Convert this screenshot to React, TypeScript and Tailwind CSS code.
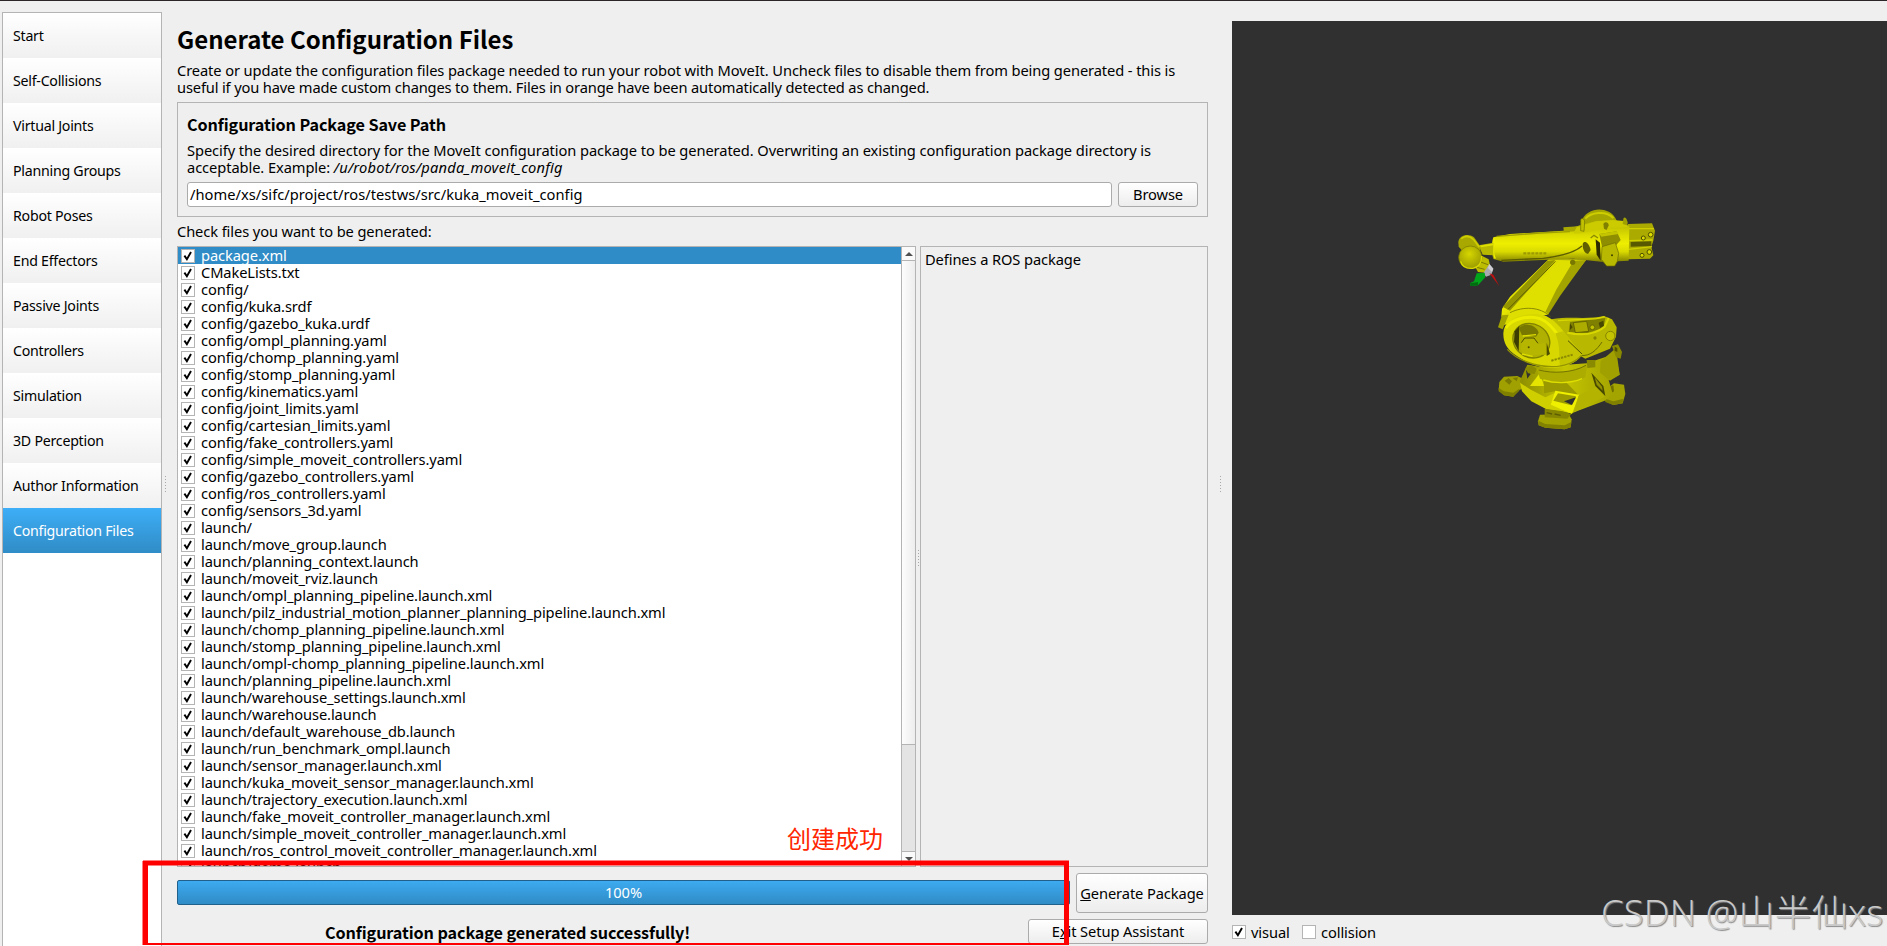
import clsx from 'clsx';

const steps = [
  'Start',
  'Self-Collisions',
  'Virtual Joints',
  'Planning Groups',
  'Robot Poses',
  'End Effectors',
  'Passive Joints',
  'Controllers',
  'Simulation',
  '3D Perception',
  'Author Information',
  'Configuration Files',
];

const files = [
  'package.xml',
  'CMakeLists.txt',
  'config/',
  'config/kuka.srdf',
  'config/gazebo_kuka.urdf',
  'config/ompl_planning.yaml',
  'config/chomp_planning.yaml',
  'config/stomp_planning.yaml',
  'config/kinematics.yaml',
  'config/joint_limits.yaml',
  'config/cartesian_limits.yaml',
  'config/fake_controllers.yaml',
  'config/simple_moveit_controllers.yaml',
  'config/gazebo_controllers.yaml',
  'config/ros_controllers.yaml',
  'config/sensors_3d.yaml',
  'launch/',
  'launch/move_group.launch',
  'launch/planning_context.launch',
  'launch/moveit_rviz.launch',
  'launch/ompl_planning_pipeline.launch.xml',
  'launch/pilz_industrial_motion_planner_planning_pipeline.launch.xml',
  'launch/chomp_planning_pipeline.launch.xml',
  'launch/stomp_planning_pipeline.launch.xml',
  'launch/ompl-chomp_planning_pipeline.launch.xml',
  'launch/planning_pipeline.launch.xml',
  'launch/warehouse_settings.launch.xml',
  'launch/warehouse.launch',
  'launch/default_warehouse_db.launch',
  'launch/run_benchmark_ompl.launch',
  'launch/sensor_manager.launch.xml',
  'launch/kuka_moveit_sensor_manager.launch.xml',
  'launch/trajectory_execution.launch.xml',
  'launch/fake_moveit_controller_manager.launch.xml',
  'launch/simple_moveit_controller_manager.launch.xml',
  'launch/ros_control_moveit_controller_manager.launch.xml',
  'launch/demo.launch',
];

function CheckBox({ checked = true }: { checked?: boolean }) {
  return (
    <span className="block h-[14px] w-[14px] shrink-0 border border-[#b4b4b4] bg-white">
      {checked && (
        <svg viewBox="0 0 12 12" className="block h-3 w-3">
          <path d="M2.4 5.6 L4.9 9.3 L9 2" fill="none" stroke="#000" strokeWidth="1.9" />
        </svg>
      )}
    </span>
  );
}

function Sidebar() {
  return (
    <nav className="mt-[11px] ml-[2px] h-[940px] w-[160px] shrink-0 border border-[#b4b4b4] bg-white">
      {steps.map((step) => (
        <div
          key={step}
          className={clsx(
            'flex h-[45px] items-center bg-linear-to-b pt-px pl-[10px] text-[14.2px] tracking-[-0.25px] whitespace-nowrap',
            step === 'Configuration Files'
              ? 'from-[#3daef7] to-[#308cc6] text-white'
              : 'from-white to-[#f0f0f0] text-black',
          )}
        >
          {step}
        </div>
      ))}
    </nav>
  );
}

function Grip() {
  return (
    <div className="flex h-[16px] w-px flex-col justify-between">
      {[0, 1, 2, 3, 4, 5].map((i) => (
        <span key={i} className="h-px w-px bg-[#a8a8a8]" />
      ))}
    </div>
  );
}

function SavePath() {
  return (
    <section className="mt-[6px] h-[115px] border border-[#b4b4b4] pt-[9px] pl-[9px]">
      <h2 className="font-['Noto_Sans_CJK_SC',sans-serif] text-[16.2px] leading-[24px] font-bold">
        Configuration Package Save Path
      </h2>
      <p className="mt-[6px] leading-[17px] tracking-[-0.08px] whitespace-nowrap">
        Specify the desired directory for the MoveIt configuration package to be generated. Overwriting an existing configuration package directory is
        <br />
        acceptable. Example: <em className="tracking-[0.2px]">/u/robot/ros/panda_moveit_config</em>
      </p>
      <div className="mt-[6px] flex gap-[6px]">
        <div className="h-[25px] w-[925px] rounded-[3px] border border-[#ababab] bg-white pl-[2px] leading-[23px] tracking-[0.03px]">
          /home/xs/sifc/project/ros/testws/src/kuka_moveit_config
        </div>
        <button className="h-[25px] w-[80px] rounded-[3px] border border-[#ababab] bg-linear-to-b from-white to-[#ededed] leading-[23px]">
          Browse
        </button>
      </div>
    </section>
  );
}

function ScrollBar() {
  return (
    <div className="flex w-[14px] flex-col border-l border-[#b4b4b4] bg-[#e4e4e4]">
      <div className="flex h-[14px] items-center justify-center border-b border-[#b4b4b4] bg-[#fafafa]">
        <svg viewBox="0 0 8 4" className="h-1 w-2">
          <path d="M0 4 L4 0 L8 4Z" fill="#505050" />
        </svg>
      </div>
      <div className="h-[484px] border-b border-[#b4b4b4] bg-linear-to-r from-[#fdfdfd] to-[#ededed]" />
      <div className="flex-1" />
      <div className="flex h-[15px] justify-center border-t border-[#b4b4b4] bg-[#fafafa] pt-[5px]">
        <svg viewBox="0 0 8 4" className="h-1 w-2">
          <path d="M0 0 L4 4 L8 0Z" fill="#505050" />
        </svg>
      </div>
    </div>
  );
}

function FileList() {
  return (
    <div className="flex h-[621px] w-[739px] border border-[#b4b4b4] bg-white">
      <ul className="flex-1 overflow-hidden">
        {files.map((file, i) => (
          <li
            key={file}
            className={clsx('flex h-[17px] items-center gap-[6px] pl-[3px] leading-[17px] whitespace-nowrap', i === 0 && 'bg-[#308cc6] text-white')}
          >
            <CheckBox />
            <span>{file}</span>
          </li>
        ))}
      </ul>
      <ScrollBar />
    </div>
  );
}

function Robot() {
  return (
    <svg viewBox="0 0 750 750" className="absolute top-[169px] left-[198px] h-[250px] w-[250px]">
      <defs>
        <linearGradient id="arm" x1="0" y1="0" x2="0" y2="1">
          <stop offset="0" stopColor="#a8a800" />
          <stop offset="0.4" stopColor="#ececec" />
          <stop offset="0.4" stopColor="#ecec00" />
          <stop offset="0.65" stopColor="#e0e000" />
          <stop offset="1" stopColor="#808000" />
        </linearGradient>
        <linearGradient id="barrel" x1="0" y1="0" x2="0" y2="1">
          <stop offset="0" stopColor="#b0b000" />
          <stop offset="0.35" stopColor="#dcdc00" />
          <stop offset="0.55" stopColor="#eeee00" />
          <stop offset="0.75" stopColor="#dada00" />
          <stop offset="1" stopColor="#808000" />
        </linearGradient>
        <linearGradient id="link" x1="0" y1="0" x2="1" y2="0.6">
          <stop offset="0" stopColor="#a8a800" />
          <stop offset="0.4" stopColor="#e8e800" />
          <stop offset="1" stopColor="#a2a200" />
        </linearGradient>
        <linearGradient id="base" x1="0" y1="0" x2="1" y2="0">
          <stop offset="0" stopColor="#8e8e00" />
          <stop offset="0.45" stopColor="#c4c400" />
          <stop offset="1" stopColor="#a0a000" />
        </linearGradient>
        <radialGradient id="ball" cx="0.45" cy="0.35" r="0.7">
          <stop offset="0" stopColor="#d6d600" />
          <stop offset="1" stopColor="#969600" />
        </radialGradient>
      </defs>

      {/* base feet */}
      <path d="M206 600 L208 576 L222 560 L262 558 L290 572 L290 592 L262 602 L250 620 L222 616Z" fill="#a0a000" />
      <path d="M206 594 L222 604 L250 608 L268 596 L268 602 L250 620 L222 616 L206 604Z" fill="#808000" />
      <path d="M224 572 L236 564 L246 574 L238 584Z M248 564 L264 562 L260 574Z" fill="#7a7a00" />
      <path d="M522 616 L538 590 L552 580 L582 584 L586 612 L578 640 L550 645 L526 634Z" fill="#a4a400" />
      <path d="M526 626 L550 634 L580 626 L578 640 L550 645 L526 636Z" fill="#808000" />
      <path d="M536 590 L550 586 L552 604 L540 612Z" fill="#707000" />
      <path d="M324 694 L330 674 L416 672 L425 688 L422 712 L404 718 L346 713 L326 706Z" fill="#a4a400" />
      <path d="M325 692 L346 702 L404 706 L424 696 L422 712 L404 718 L346 713 L326 706Z" fill="#828200" />

      {/* base plate */}
      <path d="M270 572 L292 524 L330 530 L470 520 L560 490 L569 554 L536 570 L548 612 L524 632 L424 670 L350 658 L304 630 L276 600Z" fill="url(#base)" />
      <path d="M270 578 L300 598 L346 622 L376 608 L362 644 L426 670 L350 658 L304 634 L276 604Z" fill="#cfcf00" />
      <path d="M300 588 L330 548 L342 588Z" fill="#e4e400" />
      <path d="M342 562 L410 578 L446 616 L376 604 L342 610Z" fill="#9a9a00" />
      <path d="M376 602 L448 614 L426 672 L362 644Z" fill="#efef00" />
      <path d="M384 610 L438 619 L424 646 L370 632Z" fill="#9b9b00" />
      <path d="M402 634 L438 622 L426 645Z" fill="#303030" />
      <path d="M446 616 L500 590 L524 620 L430 668Z" fill="#b4b400" />
      <path d="M484 548 L520 588 L526 618 L496 588Z" fill="#484800" />
      <path d="M494 562 L516 590 L518 602 L500 584Z" fill="#909000" />
      <path d="M288 540 L302 552 L292 566Z" fill="#303030" />
      <path d="M512 514 L554 478 L569 554 L540 572 L510 548Z" fill="#a0a000" />
      <path d="M546 468 L564 463 L576 486 L572 506 L558 502Z" fill="#8a8a00" />
      <path d="M554 470 L562 474 L562 486 L554 482Z" fill="#4f4f00" />
      <path d="M344 656 L398 664 L424 672 L412 686 L344 682Z" fill="#868600" />
      <path d="M350 668 L366 672 M374 672 L392 676" stroke="#5c5c00" strokeWidth="4" />
      <path d="M286 534 L304 526 L320 536 L314 552 L294 550Z" fill="#8a8a00" />
      <path d="M320 534 C360 552 430 550 472 522 L466 562 C430 582 370 580 330 566Z" fill="#acac00" />
      <path d="M340 570 C370 580 420 582 456 566" fill="none" stroke="#dede00" strokeWidth="4" />
      <path d="M326 540 C370 552 430 548 468 526" fill="none" stroke="#747400" strokeWidth="3" />

      {/* rear shoulder housing */}
      <path d="M364 388 C420 378 470 390 522 378 L546 388 L560 412 L558 440 L540 476 L466 506 L420 480 L372 430Z" fill="#b8b800" />
      <path d="M420 396 L526 384 L520 414 L470 430 L416 426Z" fill="#808000" />
      <path d="M430 398 L470 394 L476 424 L436 428Z" fill="#acac00" stroke="#505000" strokeWidth="2" />
      <path d="M420 400 L428 412 L420 420Z M506 398 L520 392 L522 408 L510 414Z" fill="#484800" />
      <path d="M412 428 C460 438 500 430 524 410 L536 384" fill="none" stroke="#d8d800" strokeWidth="6" />
      <path d="M384 392 L500 386 L524 380" fill="none" stroke="#d8d800" strokeWidth="4" />
      <circle cx="541" cy="438" r="14" fill="#c4c400" stroke="#858500" strokeWidth="3" />
      <circle cx="487" cy="412" r="7" fill="#c2c200" stroke="#565600" strokeWidth="2" />
      <circle cx="495" cy="444" r="5" fill="#858500" />
      <path d="M452 496 C480 500 500 480 516 456" fill="none" stroke="#6c6c00" strokeWidth="3" />
      <path d="M470 510 L496 510 L496 532 L472 534Z" fill="#8a8a00" />

      {/* lower arm */}
      <path d="M216 356 L240 320 L356 208 L470 208 L440 246 L398 300 L352 374 L280 384 L214 380Z" fill="url(#link)" />
      <path d="M218 350 L352 212 L376 210 L240 362Z" fill="#959500" />
      <path d="M234 358 L330 262 L376 214" fill="none" stroke="#5c5c00" strokeWidth="3" />
      <path d="M254 356 L388 212 L430 214 L378 300 L346 368Z" fill="#e0e000" />
      <path d="M430 214 L468 210 L390 318 L354 374 L346 366 L380 298Z" fill="#a4a400" />
      <path d="M218 376 C270 344 330 350 356 372 L330 380 L218 406Z" fill="#dede00" />
      <path d="M204 412 L216 376 L236 374 L218 418Z" fill="#a2a200" />
      <path d="M240 368 C280 348 330 350 362 380" fill="none" stroke="#606000" strokeWidth="2" />
      <circle cx="428" cy="217" r="8" fill="#787800" />

      {/* shoulder disc */}
      <path d="M220 430 C222 386 270 372 322 372 C360 374 386 404 408 434 L456 494 C440 520 400 534 360 534 C320 532 270 510 242 484 C226 468 220 452 220 430Z" fill="#d8d800" />
      <path d="M228 414 C246 384 300 376 330 386 C366 400 380 436 410 466" fill="none" stroke="#ecec00" strokeWidth="9" />
      <path d="M400 424 L456 494 C440 516 420 524 390 530 C386 496 392 470 376 430Z" fill="#c4c400" />
      <path d="M232 478 C262 512 320 530 366 530 C404 530 438 516 454 496" fill="none" stroke="#949400" strokeWidth="4" />
      <ellipse cx="304" cy="452" rx="57" ry="50" transform="rotate(30 304 452)" fill="#b0b000" stroke="#808000" strokeWidth="4" />
      <path d="M254 424 L268 408 L266 484 L252 456Z" fill="#3c3c00" />
      <path d="M266 414 C290 394 320 408 326 428 L318 440 L276 436Z" fill="#787800" />
      <path d="M276 450 L316 444 L330 462 L344 458 L354 494 L282 496 L272 476Z" fill="#b6b600" />
      <path d="M274 458 L284 444 L312 444 L324 460" fill="none" stroke="#4c4c00" strokeWidth="3" />
      <path d="M278 438 L318 434 M276 492 L308 499" stroke="#dede00" strokeWidth="4" />
      <path d="M350 458 L360 492 L350 498Z" fill="#4c4c00" />
      <circle cx="296" cy="472" r="3" fill="#505000" />
      <path d="M414 452 L456 492" stroke="#505000" strokeWidth="3" />
      <path d="M364 512 L428 494" stroke="#8c8c00" strokeWidth="6" strokeDasharray="7 3" />

      {/* elbow motor */}
      <path d="M452 100 C462 62 500 54 522 60 C546 66 560 82 562 102 L500 116Z" fill="#a6a600" />
      <path d="M466 86 C482 68 526 60 550 84" fill="none" stroke="#cdcd00" strokeWidth="6" />
      <path d="M594 102 L666 100 L675 122 L670 152 L664 170 L670 196 L660 206 L594 208Z" fill="#aaaa00" />
      <path d="M594 116 L672 116 M598 152 L668 150 M596 178 L666 170" stroke="#cfcf00" strokeWidth="4" />
      <path d="M602 156 L664 154 L664 168 L602 170Z" fill="#585800" />
      <g fill="#dada00" stroke="#505000" strokeWidth="3">
        <circle cx="640" cy="144" r="6" />
        <circle cx="662" cy="134" r="7" />
        <circle cx="636" cy="196" r="6" />
        <circle cx="658" cy="186" r="7" />
      </g>

      {/* upper arm */}
      <path d="M190 142 L240 132 L400 122 L450 106 L500 92 L560 92 L598 108 L596 212 L520 216 L430 206 L220 215 L190 207 C184 184 184 160 190 142Z" fill="url(#barrel)" />
      <path d="M400 112 L456 108 L460 122 L402 126Z" fill="#a9a900" />
      <path d="M430 130 C466 134 490 118 530 114 L592 112 L592 94 L548 90 L498 94 L440 112Z" fill="#cbcb00" />
      <path d="M200 139 L330 129 L420 125" fill="none" stroke="#a0a000" strokeWidth="4" />
      <path d="M194 148 C188 164 188 190 196 206" fill="none" stroke="#efef00" strokeWidth="4" />
      <path d="M214 211 L340 205 C396 198 436 186 456 168" fill="none" stroke="#5c5c00" strokeWidth="4" />
      <path d="M280 190 L352 190" stroke="#9c9c00" strokeWidth="7" strokeDasharray="9 3" />
      <path d="M452 92 C452 82 464 84 464 96 L462 124 L452 122Z" fill="#c0c000" stroke="#707000" strokeWidth="2" />
      <path d="M580 86 C584 78 592 84 592 100 L590 106 L578 102Z" fill="#a0a000" />
      <path d="M520 102 C524 94 536 96 536 106 L530 120 L522 116Z" fill="#808000" />
      <path d="M458 162 C462 150 476 156 482 180 L474 192 C464 190 458 180 458 162Z" fill="#606000" />
      <path d="M497 148 L510 158 L512 212 L500 194Z" fill="#2c2c00" />
      <path d="M508 132 L560 124 L572 150 L548 178 L516 170Z" fill="#8e8e00" />
      <path d="M508 132 L560 124 L566 132 L514 140Z" fill="#c4c400" />
      <path d="M516 170 L556 158 L566 190 L562 214 L554 228 L530 228 L514 208Z" fill="#b8b800" stroke="#6c6c00" strokeWidth="2" />
      <circle cx="546" cy="196" r="3" fill="#404000" />
      <path d="M482 144 L492 136 L504 144" fill="none" stroke="#8c8c00" strokeWidth="4" />

      {/* wrist */}
      <path d="M146 166 L190 158 L190 196 L158 194Z" fill="#b8b800" />
      <path d="M148 170 L190 163" stroke="#e0e000" strokeWidth="5" />
      <path d="M85 156 C88 134 116 130 132 142 L152 170 L150 200 L98 184 L86 170Z" fill="#a8a800" />
      <path d="M94 146 C106 136 120 138 132 150 L148 172" fill="none" stroke="#cfcf00" strokeWidth="5" />
      <path d="M134 228 L152 196 L176 208 L180 226 L166 248 L144 246Z" fill="#bcbc00" />
      <path d="M140 232 L164 238 M152 216 L174 224" stroke="#7a7a00" strokeWidth="3" />
      <ellipse cx="121" cy="202" rx="35" ry="34" fill="url(#ball)" stroke="#767600" strokeWidth="2" />
      <path d="M92 214 C96 230 112 236 128 235 C146 232 155 218 155 198" fill="none" stroke="#d8d800" strokeWidth="4" />
      <path d="M178 222 L190 236 L184 254 L168 260 L160 250Z" fill="#a9a9b2" />
      <path d="M178 222 L190 236 L186 246 L174 234Z" fill="#cfcfd2" />
      <path d="M140 250 L164 248 L166 262 L144 286 L122 288 L120 280 L132 274Z" fill="#00a51c" />
      <path d="M120 280 L144 276 L144 286 L122 288Z" fill="#006e10" />
      <path d="M178 250 L190 254 L208 289Z" fill="#c01010" />
    </svg>
  );
}

export default function App() {
  return (
    <div className="relative flex h-[946px] w-[1887px] overflow-hidden border-t border-[#2b2429] bg-[#efefef] font-['Noto_Sans',sans-serif] text-[14.67px] tracking-[-0.1px] text-black">
      <Sidebar />
      <div className="mt-[475px] ml-[3px] w-[12px] shrink-0">
        <Grip />
      </div>

      <main className="w-[1031px] shrink-0 pt-[18px]">
        <h1 className="font-['Noto_Sans_CJK_SC',sans-serif] text-[24px] leading-[40px] font-bold tracking-normal">Generate Configuration Files</h1>
        <p className="mt-[3px] leading-[17px] whitespace-nowrap">
          Create or update the configuration files package needed to run your robot with MoveIt. Uncheck files to disable them from being generated - this is
          <br />
          <span className="tracking-[-0.15px]">
            useful if you have made custom changes to them. Files in orange have been automatically detected as changed.
          </span>
        </p>
        <SavePath />
        <p className="mt-[5px] mb-[6px] leading-[18px]">Check files you want to be generated:</p>
        <div className="flex">
          <FileList />
          <div className="w-[4px] shrink-0 pt-[304px] pl-[2px]">
            <Grip />
          </div>
          <div className="h-[621px] flex-1 border border-[#b4b4b4] pt-[3px] pl-[4px] leading-[18px]">Defines a ROS package</div>
        </div>
        <div className="mt-[6px] flex items-center justify-between">
          <div className="mb-px h-[25px] w-[893px] rounded-[2px] border border-[#20608a] bg-linear-to-b from-[#3daaf0] to-[#308cc6] text-center leading-[22px] text-white">
            100%
          </div>
          <button className="h-[40px] w-[132px] rounded-[3px] border border-[#ababab] bg-linear-to-b from-white to-[#ededed] whitespace-nowrap">
            <u>G</u>enerate Package
          </button>
        </div>
        <div className="mt-[6px] flex items-center justify-end">
          <p className="w-[703px] pt-[2px] font-['Noto_Sans_CJK_SC',sans-serif] text-[16.2px] leading-[23px] font-bold">
            Configuration package generated successfully!
          </p>
          <button className="h-[25px] w-[180px] rounded-[3px] border border-[#ababab] bg-linear-to-b from-white to-[#ededed] leading-[23px]">
            E<u>x</u>it Setup Assistant
          </button>
        </div>
      </main>

      <div className="mt-[475px] ml-[12px] w-[12px] shrink-0">
        <Grip />
      </div>

      <aside className="flex-1 pt-[20px]">
        <div className="relative h-[894px] bg-[#303030]">
          <Robot />
        </div>
        <div className="flex items-center pt-[6px]">
          <CheckBox />
          <span className="ml-[5px] w-[51px]">visual</span>
          <CheckBox checked={false} />
          <span className="ml-[5px]">collision</span>
        </div>
      </aside>

      {/* annotations drawn over the window */}
      <div className="absolute top-[860px] left-[143px] h-[84px] w-[926px] border-x-5 border-t-4 border-b-2 border-[#ff0000] shadow-[0_-1px_0_#ff000080,-1px_0_0_#ff000080,inset_0_1px_0_#ff000080]" />
      <div className="absolute top-[819px] left-[787px] font-['Noto_Sans_CJK_SC',sans-serif] text-[24px] leading-[36px] tracking-normal text-[#ff2600]">
        创建成功
      </div>
      <div className="absolute top-[885px] left-[1601px] font-['Open_Sans','Noto_Sans_CJK_SC',sans-serif] text-[36.4px] leading-[52px] font-light tracking-[0.2px] whitespace-nowrap text-[#c9c9c9] [text-shadow:1px_1px_1px_#8a8a8a]">
        CSDN @山半仙xs
      </div>
    </div>
  );
}
